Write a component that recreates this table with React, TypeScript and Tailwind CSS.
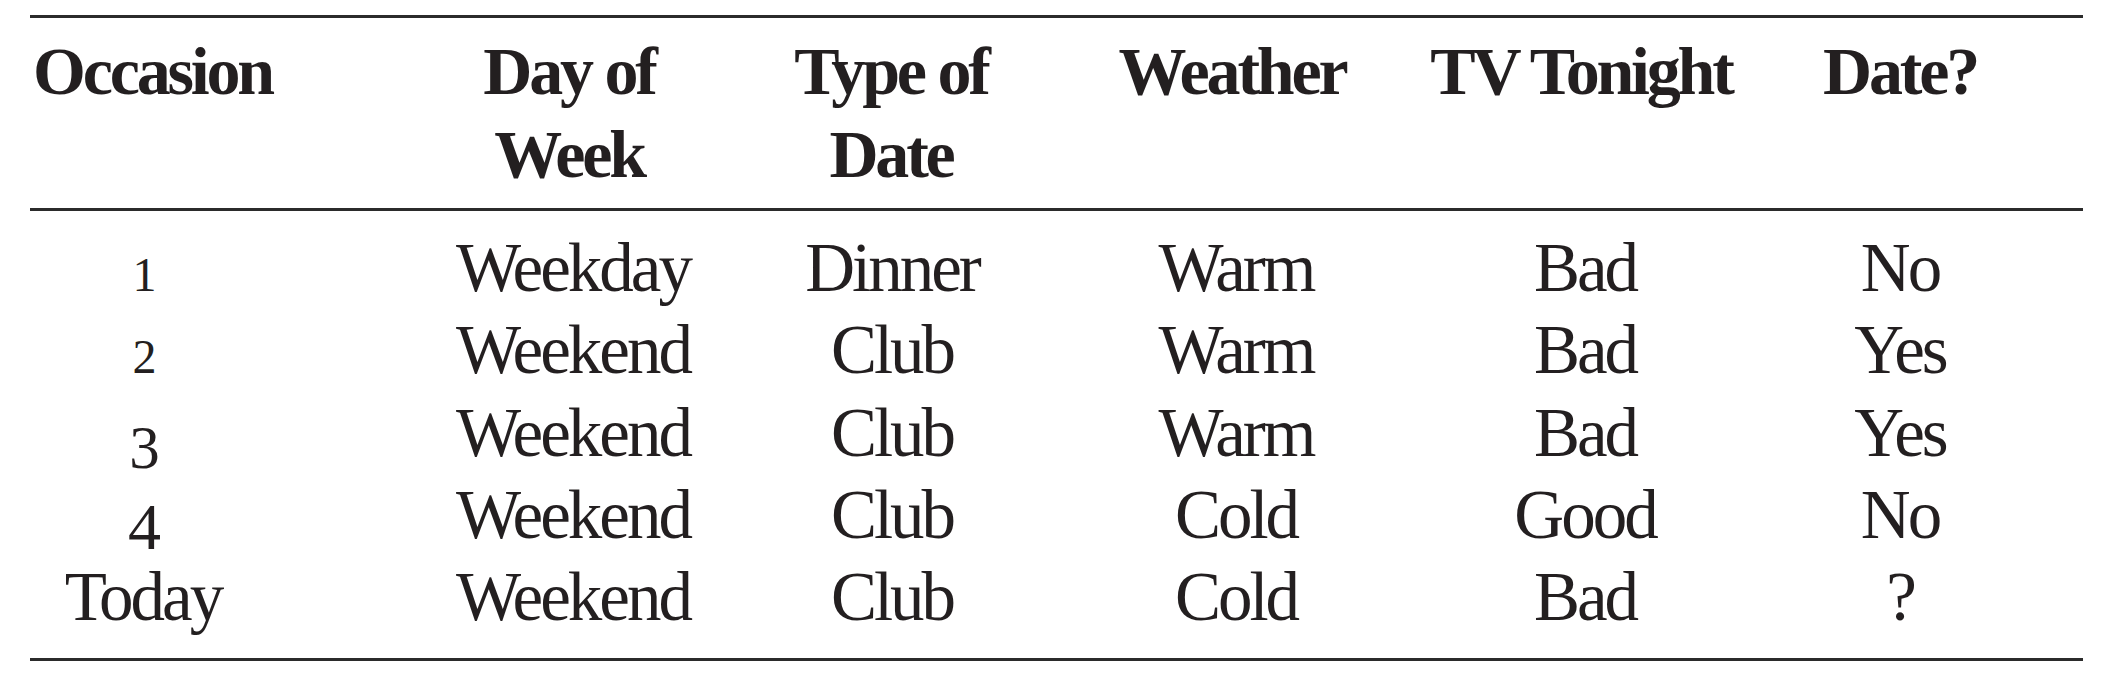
const cols = 'grid grid-cols-[382px_322px_316px_372px_326px_304px]';

const headers = [
  { label: ['Occasion'], align: 'text-left pl-[3px]' },
  { label: ['Day of', 'Week'], align: 'text-center pr-[8px]' },
  { label: ['Type of', 'Date'], align: 'text-center pr-[2px]' },
  { label: ['Weather'], align: 'text-center pr-[8px]' },
  { label: ['TV Tonight'], align: 'text-center pr-[8px]' },
  { label: ['Date?'], align: 'text-center' },
];

const rows = [
  ['1', 'Weekday', 'Dinner', 'Warm', 'Bad', 'No'],
  ['2', 'Weekend', 'Club', 'Warm', 'Bad', 'Yes'],
  ['3', 'Weekend', 'Club', 'Warm', 'Bad', 'Yes'],
  ['4', 'Weekend', 'Club', 'Cold', 'Good', 'No'],
  ['Today', 'Weekend', 'Club', 'Cold', 'Bad', '?'],
];

// old-style figures: 1 and 2 sit at x-height, 3 and 4 drop below the baseline
const figure: Record<string, string> = {
  '1': 'text-[48px] leading-[0]',
  '2': 'text-[48px] leading-[0]',
  '3': 'text-[61px] leading-[0] align-[-12px]',
  '4': 'text-[66px] leading-[0] align-[-11px]',
};

function Occasion({ value }: { value: string }) {
  const cls = figure[value];
  return (
    <div className="w-[226px] text-center">
      {cls ? <span className={cls}>{value}</span> : value}
    </div>
  );
}

export default function App() {
  return (
    <div className="min-h-screen w-[2113px] bg-white text-[#231f20] font-['Liberation_Serif','Times_New_Roman',serif]">
      <div className="mx-[30px] pt-[15px]">
        <div className="border-y-[3px] border-[#2b2b2b]">
          {/* Header */}
          <div
            className={`${cols} border-b-[3px] border-[#2b2b2b] py-[12px] text-[68px] font-bold leading-[83px] tracking-[-3.2px]`}
          >
            {headers.map((h) => (
              <div key={h.label.join(' ')} className={`${h.align} whitespace-nowrap`}>
                {h.label.map((line) => (
                  <div key={line}>{line}</div>
                ))}
              </div>
            ))}
          </div>

          {/* Body */}
          <div className="pt-[16px] pb-[20px] text-[69px] leading-[82.25px] tracking-[-3px]">
            {rows.map((row) => (
              <div key={row[0]} className={`${cols} h-[82.25px]`}>
                <Occasion value={row[0]} />
                {row.slice(1).map((cell, i) => (
                  <div key={i} className="text-center whitespace-nowrap">
                    {cell}
                  </div>
                ))}
              </div>
            ))}
          </div>
        </div>
      </div>
    </div>
  );
}
